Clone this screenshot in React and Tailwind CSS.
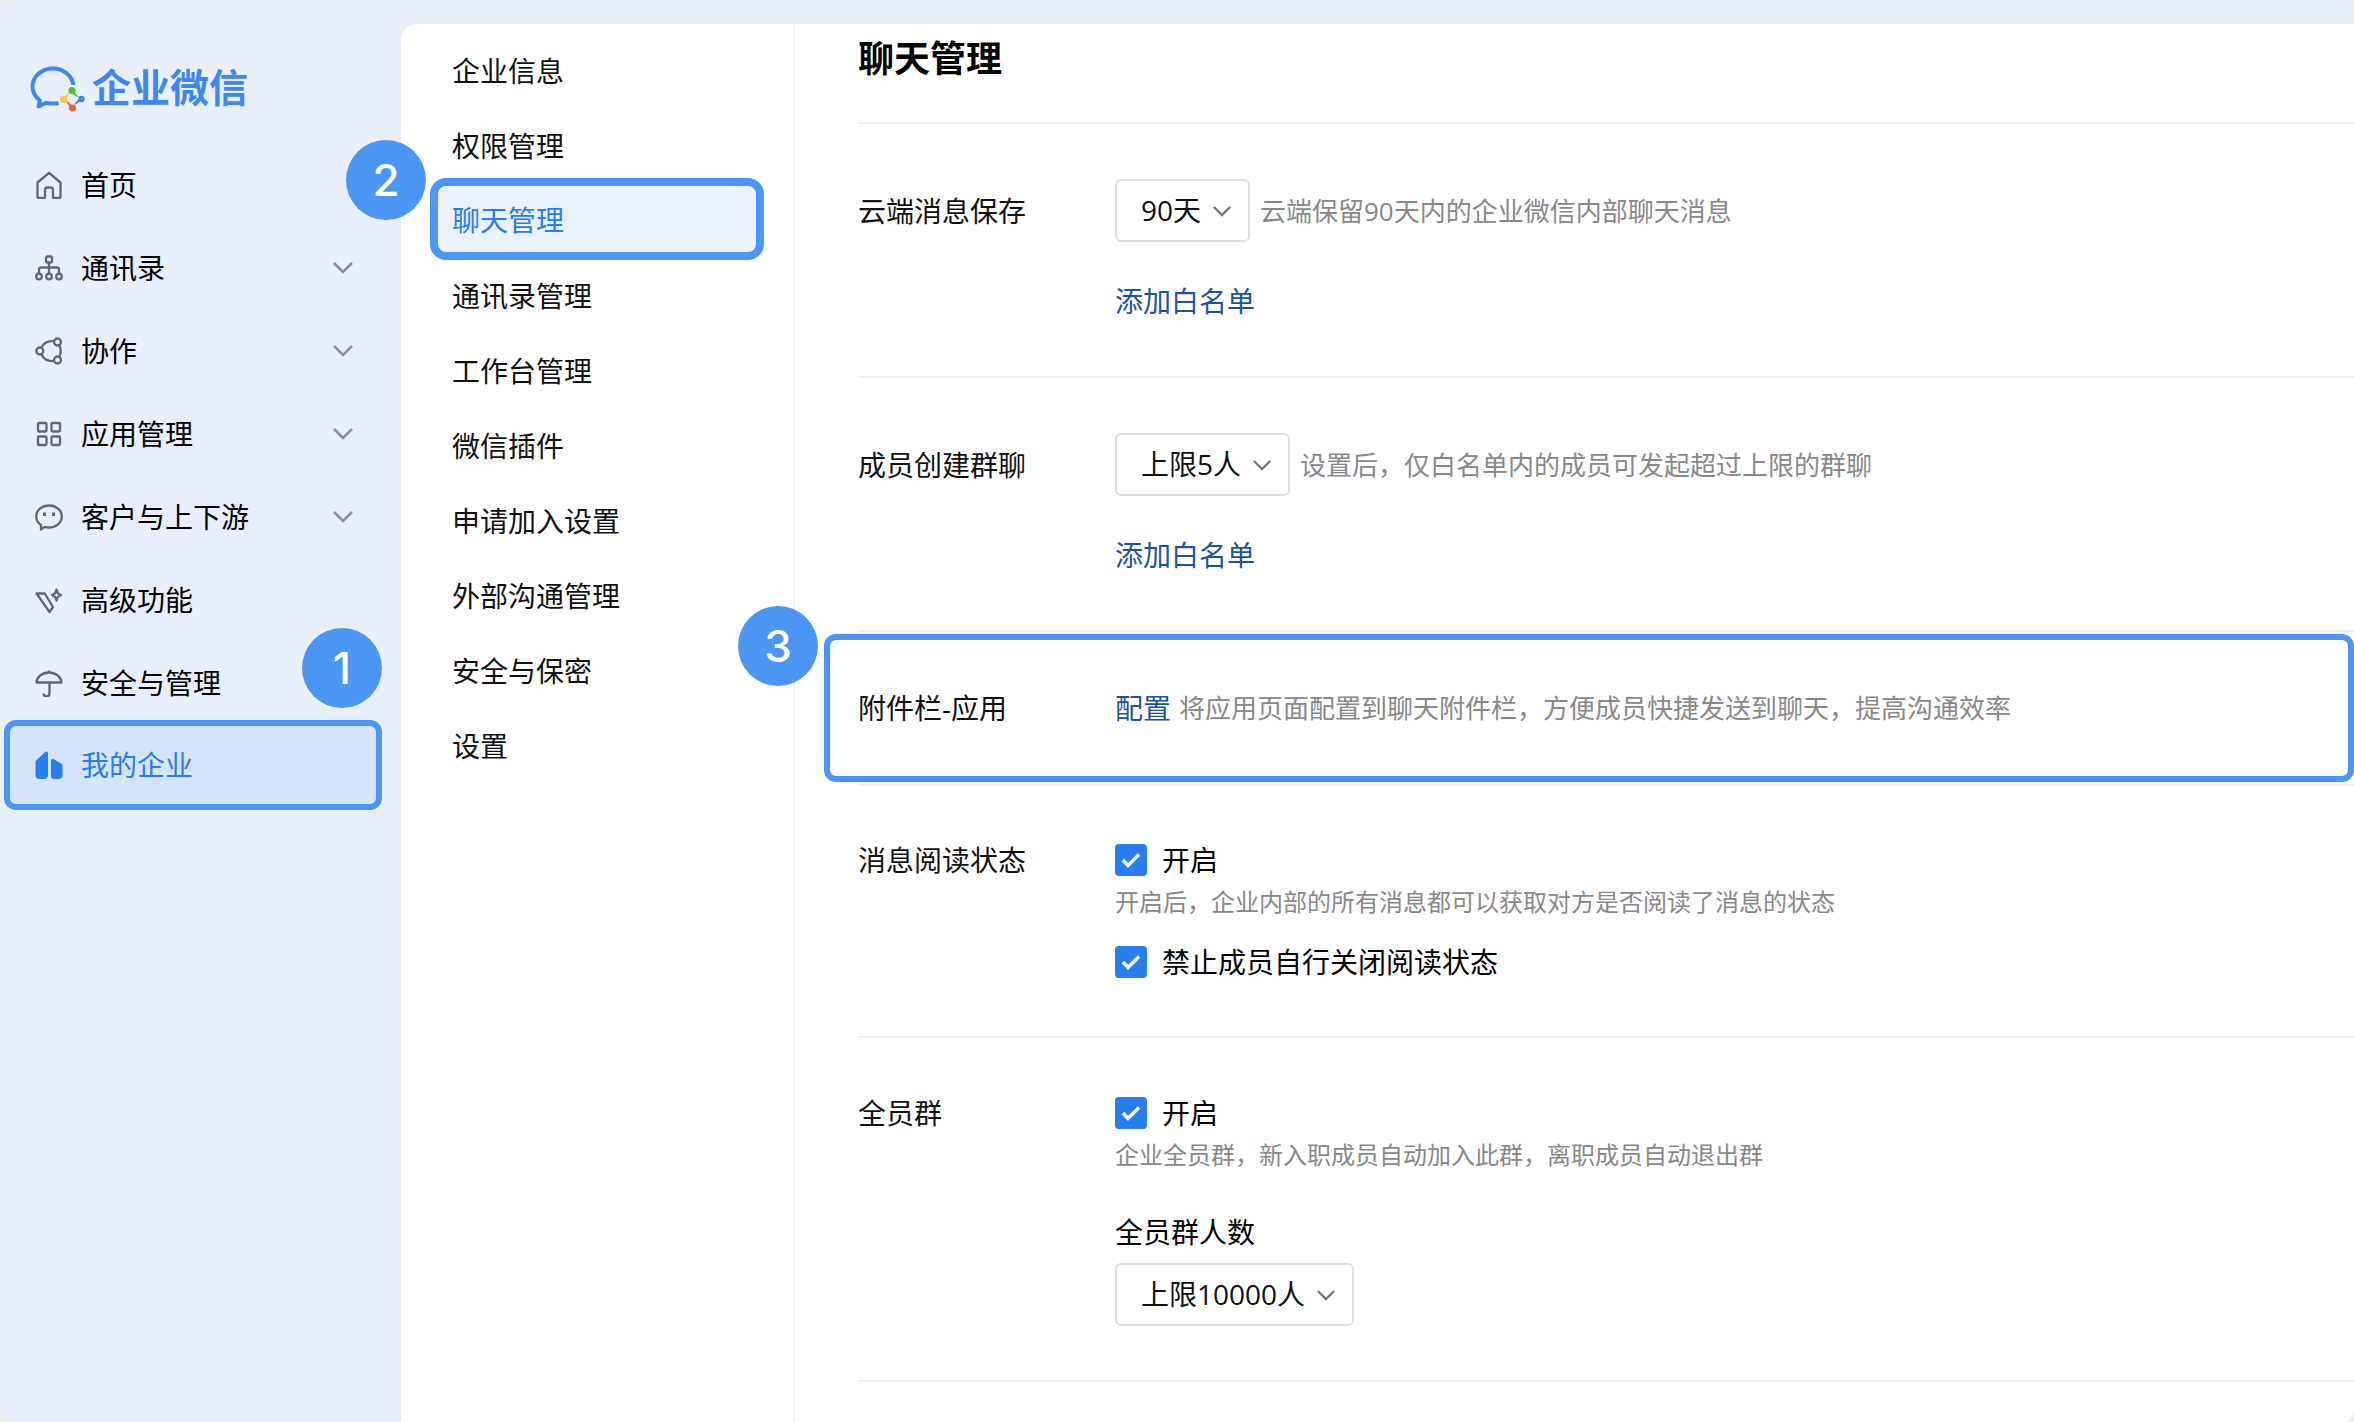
import { useState } from 'react';

const MARK = 'flex size-20 items-center justify-center rounded-full bg-[#4c96f3] font-["Inter","Noto_Sans_CJK_SC",sans-serif] text-[44px] font-medium text-white';

function Logo() {
    return (
        <svg viewBox="0 0 56 48" className="h-12 w-14 shrink-0" fill="none">
            <path
                d="M43.5 20C42 10.500 33.500 3.500 23 3.500 11.500 3.500 2.500 11.500 2.500 21.500c0 6 3 10.500 7.500 14L8.500 41.500l7.500-3.800c2.300.600 4.600.900 7 .900 2 0 3.800-.200 5.600-.600"
                stroke="#3b88f5"
                strokeWidth="4"
                strokeLinejoin="round"
            />
            <circle cx="42" cy="25.500" r="3.600" fill="#57b83a" />
            <path d="M44 27l4.500 4.500-1 .500-5-3z" fill="#57b83a" />
            <circle cx="51.500" cy="34" r="3.200" fill="#3b88f5" />
            <path d="M50 36l-5 4-.500-1 4-5z" fill="#3b88f5" />
            <circle cx="42.500" cy="43" r="3.600" fill="#f0642d" />
            <path d="M40 42l-3.500-5 1.500-.500 4 4z" fill="#f0642d" />
            <circle cx="33.500" cy="34.500" r="3.600" fill="#f8c845" />
            <path d="M34 31.500l5-4 .500 1-4 6z" fill="#f8c845" />
        </svg>
    );
}

const icons = {
    home: <path d="M2.500 11.500 14 1.800l11.500 9.700V26a.800.800 0 0 1-.800.800H18V19a2.500 2.500 0 0 0-2.500-2.500h-3A2.500 2.500 0 0 0 10 19v7.800H3.300a.800.800 0 0 1-.800-.800z" />,
    contacts: (
        <>
            <rect x="11" y="2.500" width="6" height="6" rx="1.500" />
            <path d="M14 8.500v5M4 19v-3.500a2 2 0 0 1 2-2h16a2 2 0 0 1 2 2V19M14 13.500V19" />
            <circle cx="4" cy="22.500" r="2.800" />
            <circle cx="14" cy="22.500" r="2.800" />
            <circle cx="24" cy="22.500" r="2.800" />
        </>
    ),
    share: (
        <>
            <circle cx="4.800" cy="14" r="3.500" />
            <circle cx="22.500" cy="5" r="3.500" />
            <circle cx="22.500" cy="23" r="3.500" />
            <path d="M6.500 10.500C8.500 6 12.500 3.800 18.500 3.800M6.500 17.500c2 4.500 6 6.700 12 6.700M24.500 8.500c1.600 3.600 1.600 7.400 0 11" />
        </>
    ),
    apps: (
        <>
            <rect x="3" y="3" width="8.500" height="8.500" rx="1" />
            <rect x="16.500" y="3" width="8.500" height="8.500" rx="1" />
            <rect x="3" y="16.500" width="8.500" height="8.500" rx="1" />
            <rect x="16.500" y="16.500" width="8.500" height="8.500" rx="1" />
        </>
    ),
    chat: (
        <>
            <path d="M14 2.500c7.200 0 12.800 4.800 12.800 11S21.200 24.500 14 24.500c-1.500 0-3-.200-4.300-.600L6 26.500v-4.600c-3-2-4.800-5-4.800-8.400 0-6.200 5.600-11 12.800-11z" />
            <path d="M9.500 9.500v3.500M18.500 9.500v3.500" strokeWidth="3" />
        </>
    ),
    advanced: (
        <>
            <path d="M1.500 7.500h8.300L18 21l-3.500 5L1.500 7.500z" />
            <path d="M21.500 3.500 23 7.500l3 1.500-3 1.700-1.500 3.800-1.500-3.800L17 9l3-1.500z" />
        </>
    ),
    umbrella: <path d="M1.500 13.500C2 7.500 7.500 3.500 14 3.500s12 4 12.500 10zM14 1.500v2M14.500 13.500v11c0 1.700-1.200 2.800-3 2.800s-3-1.100-3-2.800" />,
    company: (
        <g fill="#267ef0" stroke="none">
            <path d="M.500 11.500c0-1 .400-1.900 1.200-2.500L10.500.800c1-.900 2.500-.200 2.500 1.100V24a4 4 0 0 1-4 4H4.500a4 4 0 0 1-4-4z" />
            <path d="M16 9.500c0-1.300 1.300-2 2.400-1.400l7.600 4.300c1 .600 1.500 1.500 1.500 2.600v9a4 4 0 0 1-4 4H19a3 3 0 0 1-3-3z" />
        </g>
    ),
};

function Icon({ name }) {
    return (
        <svg viewBox="0 0 28 28" className="size-7 shrink-0" fill="none" stroke="#62676f" strokeWidth="2.300" strokeLinejoin="round">
            {icons[name]}
        </svg>
    );
}

function Chevron({ className }) {
    return (
        <svg viewBox="0 0 20 12" fill="none" strokeWidth="2.500" className={className}>
            <path d="M1 1l9 9 9-9" stroke="currentColor" />
        </svg>
    );
}

const navItems = [
    { label: '首页', icon: 'home' },
    { label: '通讯录', icon: 'contacts', expandable: true },
    { label: '协作', icon: 'share', expandable: true },
    { label: '应用管理', icon: 'apps', expandable: true },
    { label: '客户与上下游', icon: 'chat', expandable: true },
    { label: '高级功能', icon: 'advanced' },
    { label: '安全与管理', icon: 'umbrella' },
];

const menuItems = [
    '企业信息',
    '权限管理',
    '聊天管理',
    '通讯录管理',
    '工作台管理',
    '微信插件',
    '申请加入设置',
    '外部沟通管理',
    '安全与保密',
    '设置',
];

function Sidebar() {
    return (
        <aside className="relative w-[401px] shrink-0">
            <a href="#" className="flex h-[143px] items-center gap-[6px] pt-[34px] pl-[30px] text-[39px] font-bold text-[#3f87ec]">
                <Logo />
                <span className="pb-1">企业微信</span>
            </a>
            <nav>
                {navItems.map((item) => (
                    <a key={item.label} href="#" className="flex h-[83px] items-center pr-12 pl-[35px]">
                        <Icon name={item.icon} />
                        <span className="ml-[18px] flex-1">{item.label}</span>
                        {item.expandable && <Chevron className="h-3 w-5 text-[#8b919b]" />}
                    </a>
                ))}
                <a
                    href="#"
                    className="-mt-1 mr-[19px] ml-1 flex h-[90px] items-center rounded-xl border-6 border-[#4c96f3] bg-[#d4e3fa] pl-[25px] text-[#267ef0]"
                >
                    <Icon name="company" />
                    <span className="ml-[18px]">我的企业</span>
                </a>
            </nav>
            <span className={`${MARK} absolute top-[628px] right-[19px]`}>1</span>
        </aside>
    );
}

function SubMenu() {
    return (
        <nav className="relative w-[394px] shrink-0 border-r-2 border-[#f0f0f0] pt-[9px] text-[#111]">
            {menuItems.map((label) =>
                label === '聊天管理' ? (
                    <a
                        key={label}
                        href="#"
                        className="-mt-[5px] -mb-[2px] mr-[29px] ml-[29px] flex h-[82px] items-center rounded-2xl border-8 border-[#4c96f3] bg-[#eaf1fd] pt-[2px] pl-[14px] text-[#267ef0]"
                    >
                        {label}
                    </a>
                ) : (
                    <a key={label} href="#" className="flex h-[75px] items-center pl-[51px]">
                        {label}
                    </a>
                ),
            )}
            <span className={`${MARK} absolute top-[116px] -left-[55px]`}>2</span>
        </nav>
    );
}

function Select({ id, value, label }) {
    return (
        <div className="relative w-fit">
            <select
                id={id}
                aria-label={label}
                className="block h-[63px] appearance-none rounded-md border-2 border-[#dedfe0] bg-white pr-[46px] pb-[2px] pl-6 text-[#111]"
            >
                <option>{value}</option>
            </select>
            <Chevron className="pointer-events-none absolute top-[27px] right-[19px] h-[11px] w-[18px] text-[#777]" />
        </div>
    );
}

function Checkbox({ children }) {
    const [checked, setChecked] = useState(true);

    return (
        <label className="flex h-[42px] items-center gap-[15px]">
            <span className="relative size-8">
                <input
                    type="checkbox"
                    checked={checked}
                    onChange={(e) => setChecked(e.target.checked)}
                    className="block size-8 appearance-none rounded-[4px] border-2 border-[#267ef0] checked:bg-[#267ef0]"
                />
                {checked && (
                    <svg viewBox="0 0 32 32" className="pointer-events-none absolute inset-0" fill="none" stroke="#fff" strokeWidth="3.500">
                        <path d="M8 16l5 5.500L24 10.500" />
                    </svg>
                )}
            </span>
            {children}
        </label>
    );
}

function Row({ label, className = '', children }) {
    return (
        <section className={`relative flex border-b-2 border-[#f2f2f2] ${className}`}>
            <h2 className="w-[257px] shrink-0 text-[#111]">{label}</h2>
            <div className="flex-1">{children}</div>
        </section>
    );
}

function Limit({ label, value, hint }) {
    return (
        <section className="border-b-2 border-[#f2f2f2] pt-[55px] pb-[54px]">
            <div className="flex items-center">
                <h2 className="w-[257px] shrink-0 text-[#111]">{label}</h2>
                <Select value={value} label={label} />
                <p className="ml-[10px] text-[26px] text-[#888]">{hint}</p>
            </div>
            <a href="#" className="mt-[38px] ml-[257px] block w-fit text-[#1b549c]">
                添加白名单
            </a>
        </section>
    );
}

export default function App() {
    return (
        <div className="min-h-screen bg-[#eee] font-['Open_Sans','Noto_Sans_CJK_SC',sans-serif] text-[28px] leading-[42px] text-black">
            <div className="flex min-h-screen overflow-hidden rounded-xl bg-[#e8eefa]">
                <Sidebar />
                <div className="mt-6 flex min-w-0 flex-1 rounded-tl-2xl bg-white">
                    <SubMenu />
                    <main className="relative min-w-0 flex-1 pl-[63px]">
                        <h1 className="border-b-2 border-[#f2f2f2] pt-[14px] pb-[42px] text-[36px] leading-[42px] font-bold">聊天管理</h1>
                        <Limit label="云端消息保存" value="90天" hint="云端保留90天内的企业微信内部聊天消息" />
                        <Limit label="成员创建群聊" value="上限5人" hint="设置后，仅白名单内的成员可发起超过上限的群聊" />
                        <Row label="附件栏-应用" className="py-[55px]">
                            <div className="flex items-center gap-2">
                                <a href="#" className="text-[#1b549c]">
                                    配置
                                </a>
                                <p className="text-[26px] text-[#888]">
                                    将应用页面配置到聊天附件栏，方便成员快捷发送到聊天，提高沟通效率
                                </p>
                            </div>
                            <span className="pointer-events-none absolute inset-y-[2px] right-0 -left-[34px] rounded-xl border-6 border-[#4c96f3]" />
                        </Row>
                        <Row label="消息阅读状态" className="py-[53px]">
                            <Checkbox>开启</Checkbox>
                            <p className="mb-[18px] text-2xl leading-[42px] text-[#888]">
                                开启后，企业内部的所有消息都可以获取对方是否阅读了消息的状态
                            </p>
                            <Checkbox>禁止成员自行关闭阅读状态</Checkbox>
                        </Row>
                        <Row label="全员群" className="py-[54px]">
                            <Checkbox>开启</Checkbox>
                            <p className="text-2xl leading-[42px] text-[#888]">企业全员群，新入职成员自动加入此群，离职成员自动退出群</p>
                            <label htmlFor="group-size" className="mt-[35px] mb-[10px] block">
                                全员群人数
                            </label>
                            <Select id="group-size" value="上限10000人" />
                        </Row>
                        <span className={`${MARK} absolute top-[582px] -left-[57px]`}>3</span>
                    </main>
                </div>
            </div>
        </div>
    );
}
